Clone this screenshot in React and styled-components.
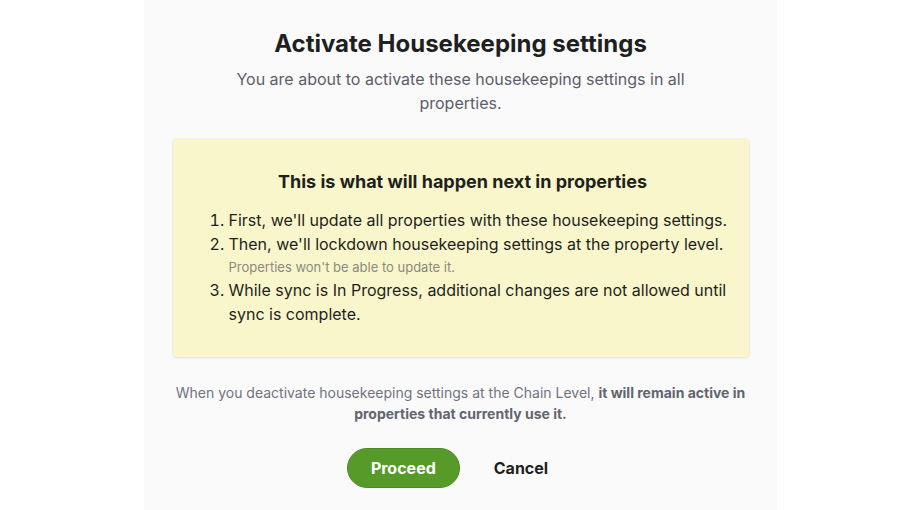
import styled, { createGlobalStyle } from 'styled-components';

const GlobalStyle = createGlobalStyle`
  html, body {
    margin: 0;
    padding: 0;
    background: #ffffff;
    font-family: Inter, "Noto Sans", sans-serif;
    -webkit-font-smoothing: antialiased;
  }
`;

// Steps shown in the yellow notice
const steps = [
  { text: "First, we'll update all properties with these housekeeping settings." },
  {
    text: "Then, we'll lockdown housekeeping settings at the property level.",
    note: "Properties won't be able to update it.",
  },
  { text: 'While sync is In Progress, additional changes are not allowed until sync is complete.' },
];

const Page = styled.div`
  display: flex;
  justify-content: center;
  min-height: 510px;
`;

const Panel = styled.div`
  width: 633px;
  min-height: 510px;
  box-sizing: border-box;
  background: #fafafb;
  padding: 29px 28px 0 29px;
  display: flex;
  flex-direction: column;
  align-items: center;
`;

const Title = styled.h1`
  margin: 0;
  font-size: 24px;
  line-height: 30px;
  font-weight: 700;
  color: #1e1f21;
  text-align: center;
`;

const Subtitle = styled.p`
  margin: 8px 0 0;
  max-width: 470px;
  font-size: 16px;
  line-height: 24px;
  color: #5b5e69;
  text-align: center;
`;

const Notice = styled.div`
  margin-top: 24px;
  width: 576px;
  box-sizing: border-box;
  padding: 31px 16px 31px 20px;
  background: #f9f6cb;
  border-radius: 4px;
  box-shadow: 0 0 0 1px rgba(0, 0, 0, 0.03), 0 1px 3px rgba(0, 0, 0, 0.08);
`;

const NoticeTitle = styled.h2`
  margin: 0;
  font-size: 18px;
  line-height: 24px;
  font-weight: 700;
  color: #1e1f21;
  text-align: center;
`;

const Steps = styled.ol`
  margin: 14px 0 0;
  padding-left: 36px;
`;

const Step = styled.li`
  font-size: 16px;
  line-height: 24px;
  color: #1e1f21;
`;

const StepNote = styled.div`
  font-size: 13px;
  line-height: 22px;
  color: #8b8a7f;
`;

const Footnote = styled.p`
  margin: 25px 0 0;
  width: 576px;
  font-size: 14px;
  line-height: 21px;
  color: #70737e;
  text-align: center;

  strong {
    font-weight: 700;
    color: #62656f;
  }
`;

const Actions = styled.div`
  display: flex;
  gap: 8px;
  margin-top: 24px;
`;

const Button = styled.button`
  height: 40px;
  padding: 0 ${(p) => (p.$primary ? '23px' : '25px')};
  border-radius: 20px;
  font-family: inherit;
  font-size: 16px;
  font-weight: 700;
  cursor: pointer;
  border: 1px solid ${(p) => (p.$primary ? '#4c8c22' : 'transparent')};
  background: ${(p) => (p.$primary ? '#569b29' : 'transparent')};
  color: ${(p) => (p.$primary ? '#ffffff' : '#1e1f21')};
`;

const App = () => (
  <Page>
    <GlobalStyle />
    <Panel>
      <Title>Activate Housekeeping settings</Title>
      <Subtitle>You are about to activate these housekeeping settings in all properties.</Subtitle>

      <Notice>
        <NoticeTitle>This is what will happen next in properties</NoticeTitle>
        <Steps>
          {steps.map((step, i) => (
            <Step key={i}>
              {step.text}
              {step.note && <StepNote>{step.note}</StepNote>}
            </Step>
          ))}
        </Steps>
      </Notice>

      <Footnote>
        When you deactivate housekeeping settings at the Chain Level,{' '}
        <strong>it will remain active in properties that currently use it.</strong>
      </Footnote>

      <Actions>
        <Button $primary>Proceed</Button>
        <Button>Cancel</Button>
      </Actions>
    </Panel>
  </Page>
);

export default App;
